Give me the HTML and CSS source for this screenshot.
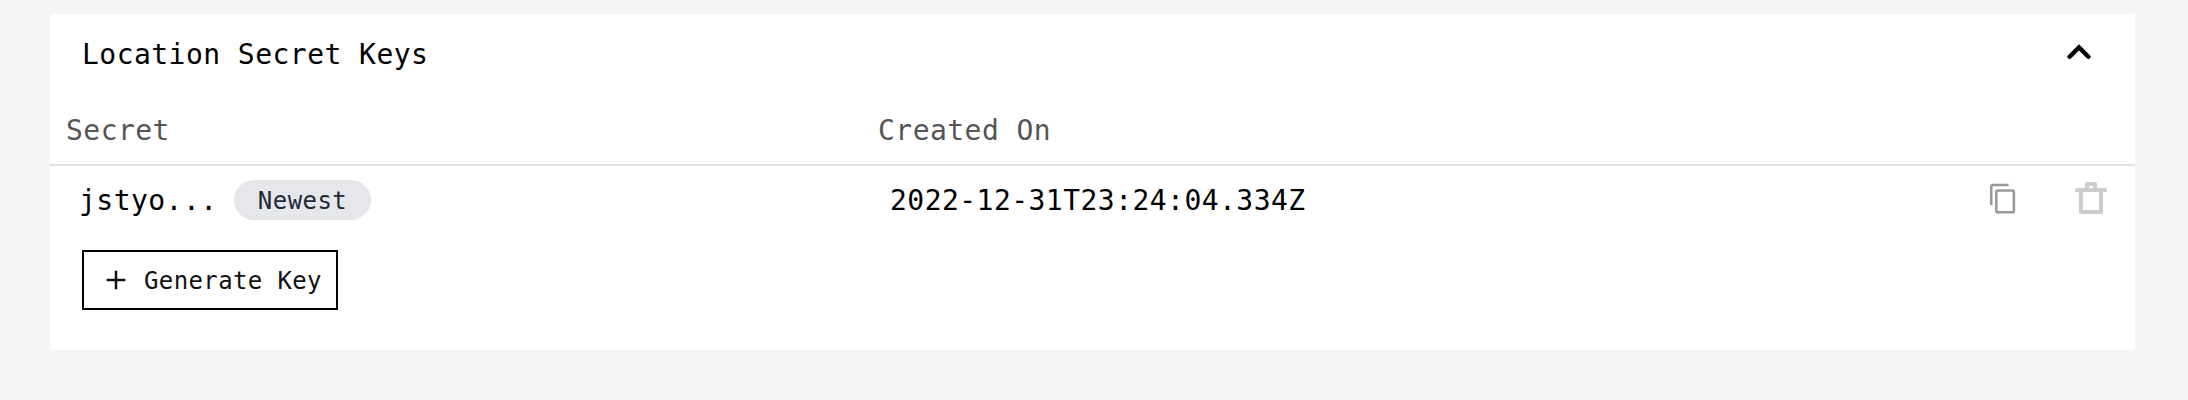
FILE: index.html
```html
<!DOCTYPE html>
<html lang="en">
<head>
<meta charset="utf-8">
<title>Location Secret Keys</title>
<link rel="stylesheet" href="styles.css">
</head>
<body>
<section class="card">
  <header class="card-header">
    <h2 class="title">Location Secret Keys</h2>
    <svg class="chevron" width="24" height="16" viewBox="0 0 24 16" aria-hidden="true"><path d="M2.6 12.8 12 3.4 21.4 12.8" fill="none" stroke="#000" stroke-width="4.4" stroke-linecap="round"/></svg>
  </header>
  <div class="grid grid-head">
    <span class="head-cell">Secret</span>
    <span class="head-cell">Created On</span>
  </div>
  <div class="grid grid-row">
    <div class="secret"><span>jstyo...</span><span class="badge">Newest</span></div>
    <div class="created">2022-12-31T23:24:04.334Z</div>
    <div class="actions">
      <svg width="27" height="32" viewBox="0 0 27 32" aria-hidden="true"><g fill="none" stroke="#999" stroke-width="2.6"><path d="M1.2 23V5Q1.2 3 3.2 3H18.5"/><rect x="6.3" y="8.5" width="17.6" height="21.8" rx="1.8"/></g></svg>
      <svg width="32" height="32" viewBox="0 0 32 32" aria-hidden="true"><path d="M0 10V8Q0 6 2 6H10V2Q10 0 12 0H20Q22 0 22 2V6H30Q32 6 32 8V10H28V30Q28 32 26 32H6Q4 32 4 30V10ZM8 10V28H24V10ZM14 4V6H18V4Z" fill="#ccc" fill-rule="evenodd"/></svg>
    </div>
  </div>
  <button class="generate" type="button">
    <svg width="20" height="20" viewBox="0 0 20 20" aria-hidden="true"><path d="M10 .7V19.3M.7 10H19.3" stroke="#111" stroke-width="2.5"/></svg>
    <span class="generate-label">Generate Key</span>
  </button>
</section>
</body>
</html>
```
FILE: styles.css
```css
* { box-sizing: border-box; }
body {
  margin: 0;
  padding: 14px 53px 50px 50px;
  background: #f5f5f5;
  color: #000;
  font: 28px/40px "DejaVu Sans Mono", monospace;
  letter-spacing: 0.46px;
}
.card { height: 336px; background: #fff; }
.card-header {
  display: flex;
  align-items: center;
  justify-content: space-between;
  height: 80px;
  padding: 0 44px 0 32px;
}
.title { margin: 2px 0 0; font: inherit; }
.chevron { margin-bottom: 4px; }
.grid {
  display: grid;
  grid-template-columns: 812px 1fr 145px;
  align-items: center;
}
.grid-head {
  height: 72px;
  padding-top: 4px;
  border-bottom: 2px solid #dfe3e8;
  color: #555;
}
.head-cell { padding-left: 16px; }
.grid-row { height: 70px; }
.secret { display: flex; align-items: center; padding-left: 29px; }
.badge {
  width: 137px;
  height: 40px;
  margin: -2px 0 0 16px;
  padding-left: 1px;
  border-radius: 20px;
  background: #e5e7eb;
  color: #1f2937;
  font-size: 24px;
  line-height: 42px;
  text-align: center;
}
.created { padding-left: 28px; }
.actions {
  display: flex;
  justify-content: space-between;
  padding-right: 28px;
  margin-top: -7px;
}
.generate {
  display: flex;
  align-items: center;
  gap: 18px;
  width: 256px;
  height: 60px;
  margin: 14px 0 0 32px;
  padding: 0 0 0 22px;
  border: 2px solid #000;
  background: #fff;
  color: #111;
  font: inherit;
  font-size: 24px;
  letter-spacing: 0.38px;
  white-space: nowrap;
}
.generate-label { padding-top: 2px; }
```
